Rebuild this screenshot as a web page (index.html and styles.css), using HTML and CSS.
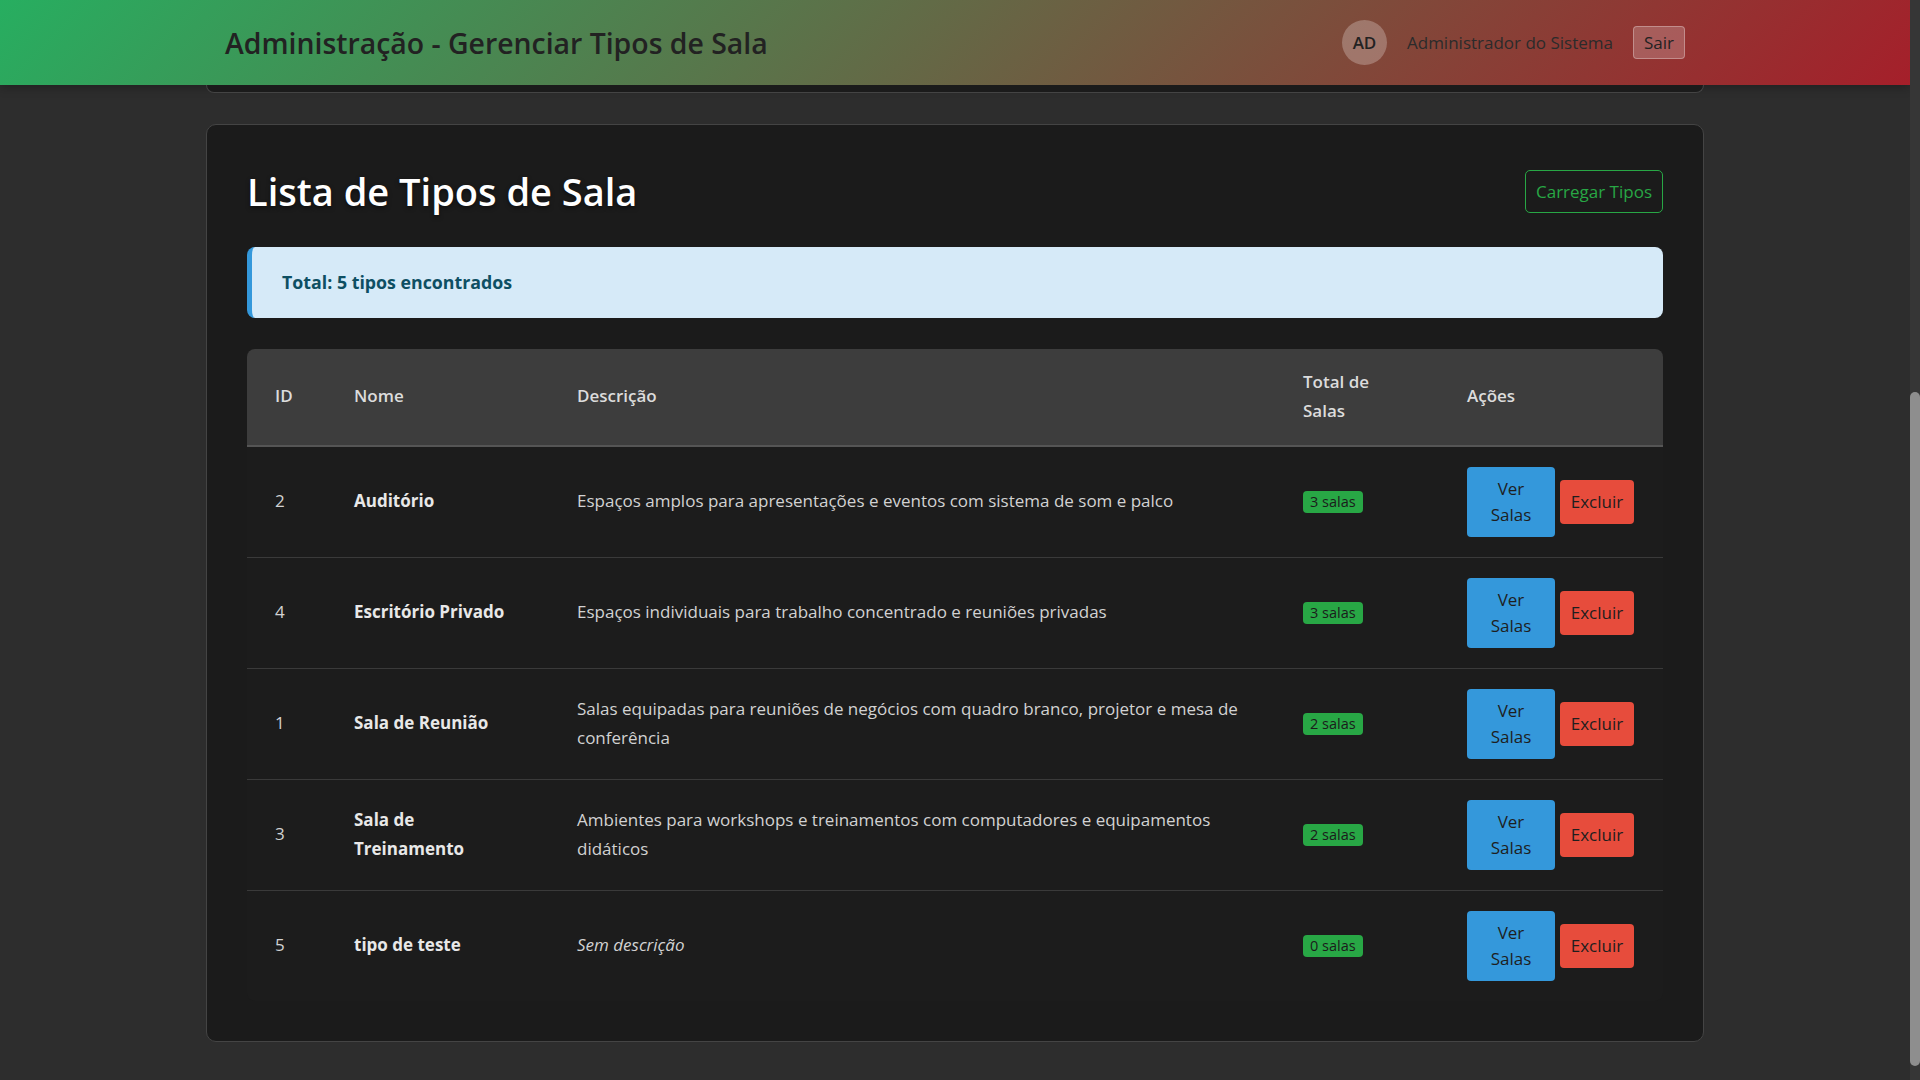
FILE: index.html
```html
<!DOCTYPE html>
<html lang="pt-BR">
<head>
<meta charset="utf-8">
<title>Administração - Gerenciar Tipos de Sala</title>
<link rel="stylesheet" href="styles.css">
</head>
<body>
<div class="viewport">
  <div class="page">
    <header class="topbar">
      <div class="container topbar-inner">
        <h1 class="topbar-title">Administração - Gerenciar Tipos de Sala</h1>
        <div class="user">
          <div class="avatar">AD</div>
          <span class="user-name">Administrador do Sistema</span>
          <button class="btn-sair">Sair</button>
        </div>
      </div>
    </header>
    <main class="container">
      <div class="card-prev"></div>
      <section class="card">
        <div class="card-head">
          <h2 class="card-title">Lista de Tipos de Sala</h2>
          <button class="btn-outline">Carregar Tipos</button>
        </div>
        <div class="alert">Total: 5 tipos encontrados</div>
        <div class="table-wrap">
          <table class="types">
            <colgroup>
              <col class="c-id"><col class="c-nome"><col class="c-desc"><col class="c-total"><col class="c-acoes">
            </colgroup>
            <thead>
              <tr><th>ID</th><th>Nome</th><th>Descrição</th><th>Total de Salas</th><th>Ações</th></tr>
            </thead>
            <tbody>
              <tr>
                <td>2</td><td class="nome">Auditório</td>
                <td>Espaços amplos para apresentações e eventos com sistema de som e palco</td>
                <td><span class="badge">3 salas</span></td>
                <td><div class="actions"><button class="btn btn-ver">Ver Salas</button><button class="btn btn-del">Excluir</button></div></td>
              </tr>
              <tr>
                <td>4</td><td class="nome">Escritório Privado</td>
                <td>Espaços individuais para trabalho concentrado e reuniões privadas</td>
                <td><span class="badge">3 salas</span></td>
                <td><div class="actions"><button class="btn btn-ver">Ver Salas</button><button class="btn btn-del">Excluir</button></div></td>
              </tr>
              <tr>
                <td>1</td><td class="nome">Sala de Reunião</td>
                <td>Salas equipadas para reuniões de negócios com quadro branco, projetor e mesa de conferência</td>
                <td><span class="badge">2 salas</span></td>
                <td><div class="actions"><button class="btn btn-ver">Ver Salas</button><button class="btn btn-del">Excluir</button></div></td>
              </tr>
              <tr>
                <td>3</td><td class="nome">Sala de Treinamento</td>
                <td>Ambientes para workshops e treinamentos com computadores e equipamentos didáticos</td>
                <td><span class="badge">2 salas</span></td>
                <td><div class="actions"><button class="btn btn-ver">Ver Salas</button><button class="btn btn-del">Excluir</button></div></td>
              </tr>
              <tr>
                <td>5</td><td class="nome">tipo de teste</td>
                <td><em class="empty">Sem descrição</em></td>
                <td><span class="badge">0 salas</span></td>
                <td><div class="actions"><button class="btn btn-ver">Ver Salas</button><button class="btn btn-del">Excluir</button></div></td>
              </tr>
            </tbody>
          </table>
        </div>
      </section>
    </main>
  </div>
  <div class="scrollbar"><div class="thumb"></div></div>
</div>
</body>
</html>
```
FILE: styles.css
```css
* { box-sizing: border-box; }
html, body {
  margin: 0;
  height: 1080px;
  overflow: hidden;
  background: #2d2d2d;
  font-family: "Segoe UI", "Open Sans", "Noto Sans", sans-serif;
}
.viewport { display: flex; height: 1080px; }
.page { flex: 1; min-width: 0; }
.scrollbar { width: 10px; background: #363636; padding-top: 392px; }
.thumb { height: 674px; background: #8e8e8e; border-radius: 5px; }

.container { max-width: 1500px; margin: 0 auto; }

.topbar {
  height: 85px;
  background: linear-gradient(135deg, #27ae60 0%, #a51f2a 100%);
  box-shadow: 0 2px 10px rgba(0,0,0,0.3);
}
.topbar-inner {
  height: 85px;
  padding: 0 20px;
  display: flex;
  align-items: center;
  justify-content: space-between;
}
.topbar-title {
  margin: 0;
  font-size: 28.4px;
  font-weight: 600;
  color: #222;
}
.user { display: flex; align-items: center; gap: 20px; }
.avatar {
  width: 45px; height: 45px; border-radius: 50%;
  background: rgba(255,255,255,0.25);
  display: flex; align-items: center; justify-content: center;
  font-size: 17px; font-weight: 600; color: #222;
}
.user-name { font-size: 17px; color: #2b2b2b; }
.btn-sair {
  font-family: inherit;
  font-size: 17px;
  color: #222;
  height: 33px;
  padding: 0 10px;
  background: rgba(255,255,255,0.2);
  border: 1px solid rgba(255,255,255,0.3);
  border-radius: 4px;
}

.card-prev {
  height: 8px;
  background: #1b1b1b;
  border: 1px solid #444;
  border-top: none;
  border-radius: 0 0 10px 10px;
  margin: 0 1px 31px;
}
.card {
  margin: 0 1px;
  background: #1b1b1b;
  border: 1px solid #444;
  border-radius: 10px;
  padding: 40px;
}
.card-head {
  display: flex;
  align-items: center;
  justify-content: space-between;
  margin-bottom: 29px;
}
.card-title {
  margin: 0;
  font-size: 38px;
  line-height: 53px;
  font-weight: 600;
  color: #fff;
  text-shadow: 0 2px 4px rgba(0,0,0,0.5);
}
.btn-outline {
  font-family: inherit;
  font-size: 17px;
  font-weight: 500;
  color: #28a745;
  background: transparent;
  border: 1px solid #28a745;
  border-radius: 5px;
  height: 43px;
  width: 138px;
  padding: 0;
}
.alert {
  background: #d6eaf8;
  border-left: 5px solid #3498db;
  border-radius: 8px;
  padding: 21px 30px;
  font-size: 17.8px;
  line-height: 29px;
  font-weight: 700;
  color: #0e4f63;
  margin-bottom: 31px;
}

.table-wrap {
  border-radius: 8px;
  overflow: hidden;
  background: #1c1c1c;
}
.types {
  width: 100%;
  table-layout: fixed;
  border-collapse: collapse;
  font-size: 17px;
  line-height: 28.8px;
}
.c-id { width: 79px; }
.c-nome { width: 223px; }
.c-desc { width: 726px; }
.c-total { width: 164px; }
.c-acoes { width: 225px; }
.types th {
  background: #3d3d3d;
  color: #dcdcdc;
  font-weight: 600;
  text-align: left;
  padding: 19px 28px;
  border-bottom: 2px solid #555;
}
.types td {
  color: #d2d2d2;
  padding: 20px 28px;
  border-bottom: 1px solid #3a3a3a;
  vertical-align: middle;
}
.types tbody tr:last-child td { border-bottom: none; }
.types td.nome { font-weight: 700; color: #e8e8e8; }
.empty { color: #d2d2d2; }
.badge {
  display: inline-block;
  background: #28a745;
  color: #1b1b1b;
  font-size: 14.5px;
  line-height: 22px;
  padding: 0 7px;
  border-radius: 4px;
}
.actions { display: flex; align-items: center; gap: 5px; }
.btn {
  font-family: inherit;
  font-size: 17px;
  line-height: 26px;
  color: #1e1e1e;
  border: none;
  border-radius: 4px;
  padding: 9px 8px;
}
.btn-ver { background: #3498db; width: 88px; padding: 9px 14px; }
.btn-del { background: #e74c3c; width: 74px; }
```
